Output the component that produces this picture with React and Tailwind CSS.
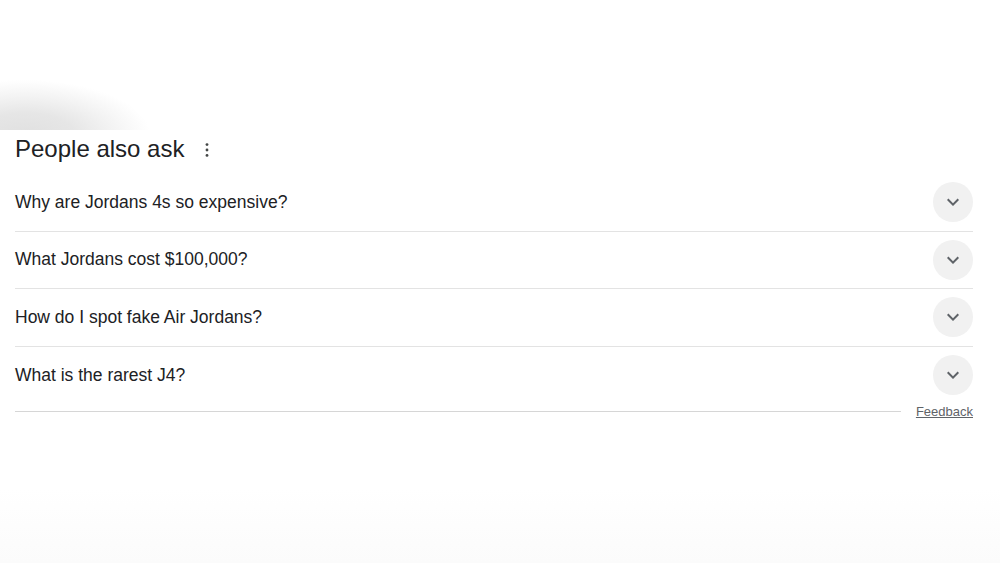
import React from "react";

const questions = [
  "Why are Jordans 4s so expensive?",
  "What Jordans cost $100,000?",
  "How do I spot fake Air Jordans?",
  "What is the rarest J4?",
];

function Chevron() {
  return (
    <svg width="24" height="24" viewBox="0 0 24 24" fill="#5f6368">
      <path d="M16.59 8.59 12 13.17 7.41 8.59 6 10l6 6 6-6z" />
    </svg>
  );
}

function Dots() {
  return (
    <svg width="20" height="20" viewBox="0 0 24 24" fill="#444746">
      <circle cx="12" cy="5.5" r="1.7" />
      <circle cx="12" cy="12" r="1.7" />
      <circle cx="12" cy="18.5" r="1.7" />
    </svg>
  );
}

export default function App() {
  return (
    <div className="w-[1000px] h-[563px] bg-white overflow-hidden flex flex-col font-['Liberation_Sans',Arial,sans-serif] text-[#202124]">
      {/* soft shade left over from the card above */}
      <div className="h-[130px] shrink-0 bg-[radial-gradient(ellipse_125px_55px_at_25px_135px,#e0e0e0_0%,#e6e6e6_40%,#f3f3f3_70%,#ffffff_100%)]" />

      <div className="pl-[15px] pr-[27px]">
        <div className="flex items-center h-[38px]">
          <h2 className="text-[24px] leading-none font-normal">People also ask</h2>
          <div className="ml-[13px] mt-[1px] flex items-center">
            <Dots />
          </div>
        </div>

        <div className="mt-[6px]">
          {questions.map((q, i) => (
            <div
              key={q}
              className={
                "flex items-center justify-between h-[57.5px] " +
                (i < questions.length - 1 ? "border-b border-[#e3e3e3]" : "")
              }
            >
              <span className="text-[17.5px] leading-none">{q}</span>
              <div className="w-[40px] h-[40px] rounded-full bg-[#f1f1f1] flex items-center justify-center">
                <Chevron />
              </div>
            </div>
          ))}
        </div>

        <div className="flex items-center mt-[1px]">
          <div className="flex-1 h-px bg-[#d6d6d6]" />
          <a className="ml-[15px] text-[13px] leading-none text-[#5f6368] underline">Feedback</a>
        </div>
      </div>

      <div className="flex-1" />
      <div className="h-[75px] shrink-0 bg-gradient-to-b from-white to-[#fbfbfb]" />
    </div>
  );
}
